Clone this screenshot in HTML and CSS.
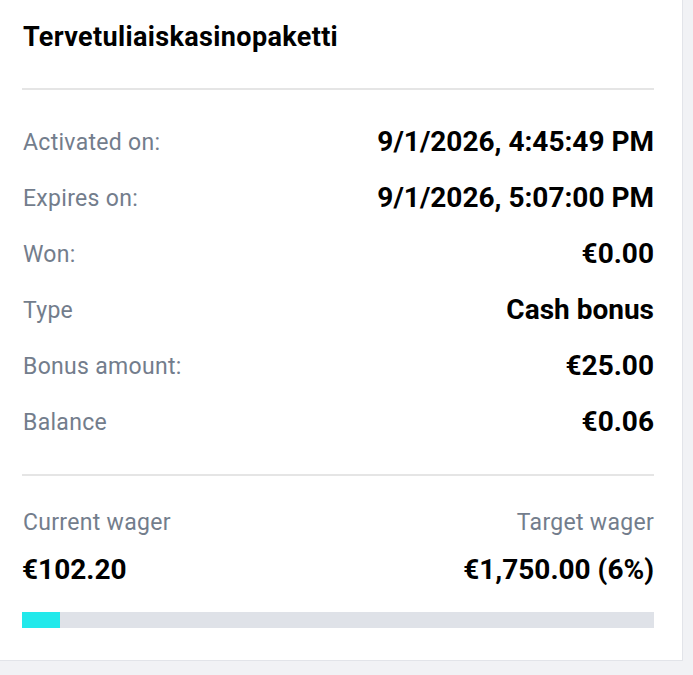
FILE: index.html
```html
<!DOCTYPE html>
<html lang="en">
<head>
  <meta charset="UTF-8" />
  <meta name="viewport" content="width=device-width, initial-scale=1.0"/>
  <title>Bonus</title>
  <link rel="stylesheet" href="styles.css">
</head>
<body>
  <div class="bonus-card">
    <h2 class="bonus-title">Tervetuliaiskasinopaketti</h2>

    <div class="bonus-details">
      <div class="row"><span class="label">Activated on:</span><span class="value">9/1/2026, 4:45:49 PM</span></div>
      <div class="row"><span class="label">Expires on:</span><span class="value">9/1/2026, 5:07:00 PM</span></div>
      <div class="row"><span class="label">Won:</span><span class="value">€0.00</span></div>
      <div class="row"><span class="label">Type</span><span class="value">Cash bonus</span></div>
      <div class="row"><span class="label">Bonus amount:</span><span class="value">€25.00</span></div>
      <div class="row"><span class="label">Balance</span><span class="value">€0.06</span></div>
    </div>

    <div class="wager">
      <div class="wager-col">
        <span class="label">Current wager</span>
        <span class="value">€102.20</span>
      </div>
      <div class="wager-col right">
        <span class="label">Target wager</span>
        <span class="value">€1,750.00 (6%)</span>
      </div>
    </div>

    <div class="progress">
      <div class="progress-fill" style="width: 6%"></div>
    </div>
  </div>
</body>
</html>
```

FILE: styles.css
```css
body {
  margin: 0;
  font-family: Roboto, 'Liberation Sans', sans-serif;
  background-color: #f1f2f5;
  color: #000;
}
.bonus-card {
  width: 683px;
  box-sizing: border-box;
  background: #fff;
  border-right: 1px solid #e2e4e9;
  border-bottom: 1px solid #e2e4e9;
  padding: 22px 28px 32px 22px;
  height: 661px;
}
.bonus-title {
  margin: 0;
  font-size: 27px;
  line-height: 30px;
  font-weight: 700;
  letter-spacing: 0.35px;
  padding: 0 1px 36px;
  border-bottom: 2px solid #e5e5e5;
}
.bonus-details {
  padding: 23px 0 25px;
  border-bottom: 2px solid #e5e5e5;
}
.row {
  display: flex;
  justify-content: space-between;
  align-items: center;
  height: 56px;
}
.row .label {
  padding-top: 2px;
}
.label {
  font-size: 23px;
  letter-spacing: 0.3px;
  color: #737d8c;
  padding-left: 1px;
}
.value {
  font-size: 28px;
  font-weight: 700;
}
.wager {
  display: flex;
  justify-content: space-between;
  padding-top: 33px;
}
.wager-col {
  display: flex;
  flex-direction: column;
  gap: 17px;
}
.wager-col .label {
  line-height: 28px;
}
.wager-col .value {
  line-height: 32px;
}
.wager-col.right {
  align-items: flex-end;
}
.progress {
  margin-top: 26px;
  height: 16px;
  background: #dfe2e8;
}
.progress-fill {
  height: 100%;
  background: #22e9eb;
}
```
